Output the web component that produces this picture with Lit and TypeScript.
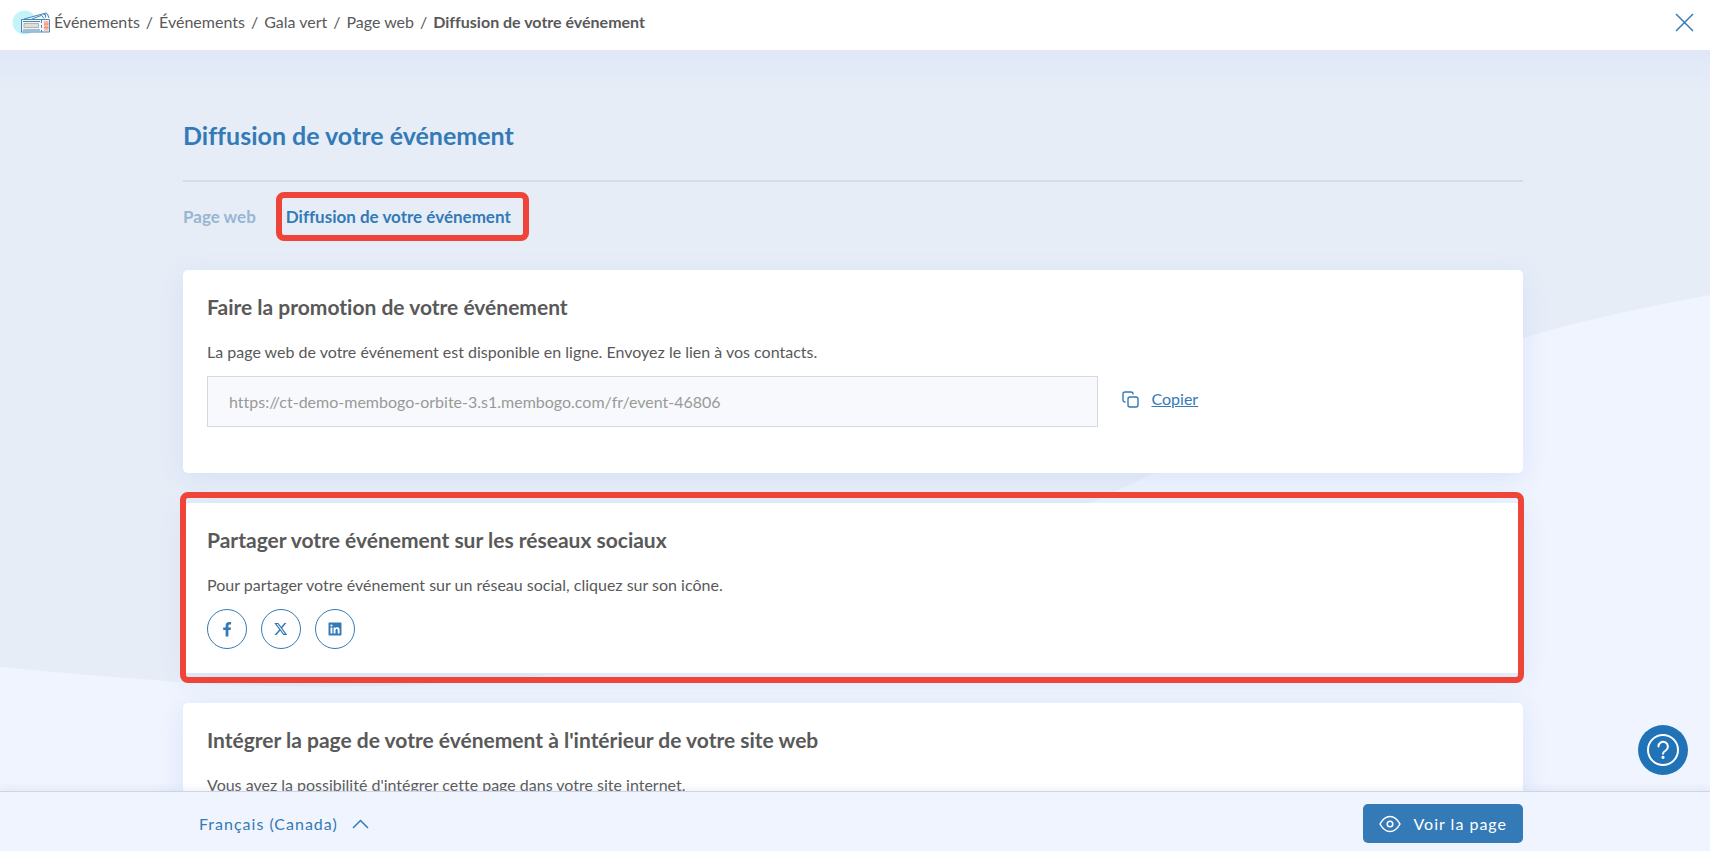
import { LitElement, html, css, svg } from "lit";
import { customElement } from "lit/decorators.js";

const crumbs = ["Événements", "Événements", "Gala vert", "Page web"];

const ticketIcon = html`<svg class="ticket" viewBox="0 0 40 28" aria-hidden="true">
  <circle cx="12.500" cy="14.500" r="12" fill="#c5f4f8" />
  <g fill="none" stroke="#4a86b8" stroke-width="1">
    <path d="M12 11 34 5l1.500 1L37 10" fill="#eef8fc" />
    <path d="M20 11l9-3.500M29 6.500l3 4M31.500 6.500h2v3" />
    <path d="M9.500 11.500h28v12.500h-28z" fill="#eef6fa" />
    <path d="M11 13.500h17M11 22h17" />
    <path d="M29.500 12v12" stroke-dasharray="3 2" />
    <path d="M12 15.500h14.500v4H12z" fill="#dfdfd8" stroke="#b3b6b0" />
  </g>
  <path d="M32 13h4.500v9.500H32z" fill="#f9b79c" />
  <path d="M32 16h4.500M32 19.500h4.500" stroke="#ef8a6c" stroke-width="1" />
</svg>`;

const socials = [
  {
    name: "Facebook",
    glyph: svg`<path d="M9.400 15.500V9h2.200l.4-2.600H9.400V4.900c0-.8.300-1.400 1.400-1.400h1.300V1.100C11.800 1.100 11 1 10.100 1 8 1 6.600 2.300 6.600 4.600v1.800H4.200V9h2.400v6.500z" />`,
  },
  {
    name: "X",
    glyph: svg`<path d="M11.500 2h2L9.200 7l5.100 7h-4L7.200 9.800 3.500 14h-2l4.700-5.400L1.300 2h4.100l2.800 3.800zm-.7 10.800h1.100L4.800 3.100H3.600z" />`,
  },
  {
    name: "LinkedIn",
    glyph: svg`<path fill-rule="evenodd" d="M2.500 1.500h11c.600 0 1 .4 1 1v11c0 .6-.4 1-1 1h-11c-.6 0-1-.4-1-1v-11c0-.6.400-1 1-1zM3.500 6.400v6.200h1.900V6.400zM4.450 3.400a1.100 1.100 0 1 0 0 2.200 1.100 1.100 0 0 0 0-2.200zM6.600 6.400v6.200h1.900V9.500c0-.9.300-1.600 1.200-1.600s1 .7 1 1.600v3.100h1.900V9.100c0-1.700-.5-2.800-2.200-2.800-.9 0-1.600.4-1.900 1v-.9z" />`,
  },
];

@customElement("app-root")
export class AppRoot extends LitElement {
  static styles = css`
    :host {
      display: flex;
      flex-direction: column;
      position: relative;
      height: 100vh;
      overflow: hidden;
      background: #f0f4fe;
      color: #595959;
      font: 16px/24px Lato, "Open Sans", sans-serif;
      font-variant-ligatures: none;
    }
    * {
      box-sizing: border-box;
    }
    h1,
    h2,
    p {
      margin: 0;
    }
    a {
      color: inherit;
      text-decoration: none;
    }
    button {
      font: inherit;
      cursor: pointer;
    }
    .topbar {
      flex: none;
      display: flex;
      align-items: center;
      justify-content: space-between;
      height: 50px;
      padding: 0 16px 6px 12px;
      background: #fff;
    }
    .crumbs {
      display: flex;
      align-items: center;
      gap: 2px;
    }
    .crumbs ol {
      display: flex;
      list-style: none;
      margin: 0;
      padding: 0;
    }
    .crumbs li + li::before {
      content: "/";
      padding: 0 6px;
      font-weight: 400;
    }
    .crumbs li:last-child {
      font-weight: 700;
    }
    .ticket {
      width: 40px;
      height: 28px;
    }
    .close {
      display: flex;
      padding: 0;
      border: 0;
      background: none;
      color: #337ab7;
    }
    .close svg {
      width: 19px;
      height: 19px;
    }
    .stage {
      flex: 1;
      min-height: 0;
      position: relative;
      overflow: hidden;
      padding: 0 4px 0 0;
    }
    .wave {
      position: absolute;
      inset: 0;
      width: 100%;
      height: 100%;
    }
    .veil {
      position: absolute;
      inset: 0 0 auto;
      height: 40px;
      background: linear-gradient(#dfe7f8, #e7edf800);
    }
    .page {
      position: relative;
      max-width: 1340px;
      margin: 0 auto;
      padding-top: 65px;
    }
    h1 {
      padding-bottom: 25px;
      border-bottom: 2px solid #d5dce7;
      font-size: 25px;
      line-height: 40px;
      font-weight: 700;
      color: #337ab7;
    }
    .tabs {
      display: flex;
      gap: 30px;
      padding: 24px 0 42px;
      font-size: 17px;
      line-height: 22px;
      font-weight: 700;
      color: #337ab7;
    }
    .tabs .idle {
      color: #98b6d2;
    }
    .marked {
      position: relative;
    }
    .marked::after {
      content: "";
      position: absolute;
      border: 6px solid #ef4438;
      border-radius: 8px;
      pointer-events: none;
    }
    .tabs .marked::after {
      inset: -14px -18px -13px -10px;
    }
    .card {
      padding: 24px;
      margin-bottom: 30px;
      border-radius: 5px;
      background: #fff;
      box-shadow: 0 5px 24px #c9d8f799;
    }
    .card.marked::after {
      inset: -11px -1px -10px -3px;
    }
    .card.promo {
      padding-bottom: 46px;
    }
    h2 {
      margin-bottom: 20px;
      font-size: 21px;
      line-height: 26px;
      font-weight: 700;
    }
    .card p {
      margin-bottom: 12px;
    }
    .link-row {
      display: flex;
      align-items: center;
      gap: 24px;
    }
    .url {
      width: 69%;
      height: 51px;
      padding: 0 21px;
      border: 1px solid #d5d9e2;
      border-radius: 0;
      background: #f7f9fc;
      color: #999;
      font: inherit;
    }
    .copy {
      display: flex;
      align-items: center;
      gap: 12px;
      padding: 0 0 5px;
      border: 0;
      background: none;
      color: #337ab7;
    }
    .copy span {
      text-decoration: underline;
    }
    .copy svg {
      width: 17px;
      height: 17px;
    }
    .socials {
      display: flex;
      gap: 14px;
    }
    .social {
      display: grid;
      place-items: center;
      width: 40px;
      height: 40px;
      border: 1px solid #337ab7;
      border-radius: 50%;
      color: #337ab7;
    }
    .social svg {
      width: 16px;
      height: 16px;
    }
    .help {
      position: absolute;
      right: 22px;
      bottom: 76px;
      display: grid;
      place-items: center;
      width: 50px;
      height: 50px;
      padding: 0;
      border: 0;
      border-radius: 50%;
      background: #2173b8;
      color: #fff;
    }
    .help svg {
      width: 34px;
      height: 34px;
    }
    .bottombar {
      flex: none;
      position: relative;
      height: 60px;
      padding-right: 4px;
      border-top: 1px solid #cdd4e2;
      background: #f0f4fe;
      box-shadow: 0 -2px 8px #a5b4d033;
      letter-spacing: 1px;
    }
    .bar-inner {
      display: flex;
      align-items: center;
      justify-content: space-between;
      max-width: 1340px;
      height: 100%;
      margin: 0 auto;
      padding: 6px 0 2px;
    }
    .lang {
      display: flex;
      align-items: center;
      gap: 14px;
      padding-left: 16px;
      color: #337ab7;
    }
    .lang select {
      appearance: none;
      padding: 0;
      border: 0;
      background: none;
      color: inherit;
      font: inherit;
      letter-spacing: inherit;
    }
    .lang svg {
      width: 17px;
      height: 10px;
    }
    .view {
      display: flex;
      align-items: center;
      gap: 12px;
      height: 39px;
      padding: 0 16px;
      border-radius: 5px;
      background: #337ab7;
      color: #fff;
    }
    .view svg {
      width: 22px;
      height: 18px;
    }
  `;

  render() {
    return html`
      <header class="topbar">
        <nav class="crumbs" aria-label="Fil d'Ariane">
          ${ticketIcon}
          <ol>
            ${crumbs.map((c) => html`<li><a href="#">${c}</a></li>`)}
            <li aria-current="page">Diffusion de votre événement</li>
          </ol>
        </nav>
        <button class="close" aria-label="Fermer">
          <svg viewBox="0 0 19 19" fill="none" stroke="currentColor" stroke-width="1.500">
            <path d="M1 1l17 17M18 1 1 18" />
          </svg>
        </button>
      </header>

      <main class="stage">
        <svg class="wave" viewBox="0 0 1710 741" preserveAspectRatio="none" aria-hidden="true">
          <path
            fill="#e7edf7"
            d="M0 0H1710V245C1640 258 1580 271 1523 288C1390 324 1270 372 1155 423C1000 495 830 580 555 624C430 638 300 640 180 632Q90 626 0 617Z"
          />
        </svg>
        <div class="veil"></div>
        <div class="page">
          <h1>Diffusion de votre événement</h1>
          <nav class="tabs" aria-label="Sections">
            <a class="idle" href="#">Page web</a>
            <a class="marked" href="#" aria-current="page">Diffusion de votre événement</a>
          </nav>

          <section class="card promo">
            <h2>Faire la promotion de votre événement</h2>
            <p id="url-label">
              La page web de votre événement est disponible en ligne. Envoyez le lien à vos contacts.
            </p>
            <div class="link-row">
              <input
                class="url"
                type="text"
                readonly
                aria-labelledby="url-label"
                value="https://ct-demo-membogo-orbite-3.s1.membogo.com/fr/event-46806"
              />
              <button class="copy">
                <svg viewBox="0 0 17 17" fill="none" stroke="currentColor" stroke-width="1.400" aria-hidden="true">
                  <rect x="6" y="6" width="10" height="10" rx="2" />
                  <path d="M3.500 11H3a2 2 0 0 1-2-2V3a2 2 0 0 1 2-2h6a2 2 0 0 1 2 2v.500" />
                </svg>
                <span>Copier</span>
              </button>
            </div>
          </section>

          <section class="card marked">
            <h2>Partager votre événement sur les réseaux sociaux</h2>
            <p>Pour partager votre événement sur un réseau social, cliquez sur son icône.</p>
            <div class="socials">
              ${socials.map(
                (s) => html`<a class="social" href="#" aria-label=${s.name}>
                  <svg viewBox="0 0 16 16" fill="currentColor" aria-hidden="true">${s.glyph}</svg>
                </a>`
              )}
            </div>
          </section>

          <section class="card">
            <h2>Intégrer la page de votre événement à l'intérieur de votre site web</h2>
            <p>Vous avez la possibilité d'intégrer cette page dans votre site internet.</p>
          </section>
        </div>
      </main>

      <footer class="bottombar">
        <div class="bar-inner">
          <label class="lang">
            <select aria-label="Langue">
              <option>Français (Canada)</option>
            </select>
            <svg viewBox="0 0 17 10" fill="none" stroke="currentColor" stroke-width="1.500" aria-hidden="true">
              <path d="M1 9l7.500-7.500L16 9" />
            </svg>
          </label>
          <a class="view" href="#">
            <svg viewBox="0 0 22 18" fill="none" stroke="currentColor" stroke-width="1.500" aria-hidden="true">
              <path d="M1 9C3.500 4.500 6.500 1.500 11 1.500S18.500 4.500 21 9c-2.500 4.500-5.500 7.500-10 7.500S3.500 13.500 1 9z" />
              <circle cx="11" cy="9" r="2.800" />
            </svg>
            <span>Voir la page</span>
          </a>
        </div>
      </footer>

      <button class="help" aria-label="Aide">
        <svg viewBox="0 0 34 34" fill="none" stroke="currentColor" stroke-width="2" stroke-linecap="round" aria-hidden="true">
          <circle cx="17" cy="17" r="15" />
          <path d="M12.500 13.500a4.700 4.700 0 1 1 7.200 4c-1.700 1-2.700 1.800-2.700 3.300" />
          <circle cx="17" cy="24.300" r=".6" fill="currentColor" />
        </svg>
      </button>
    `;
  }
}
